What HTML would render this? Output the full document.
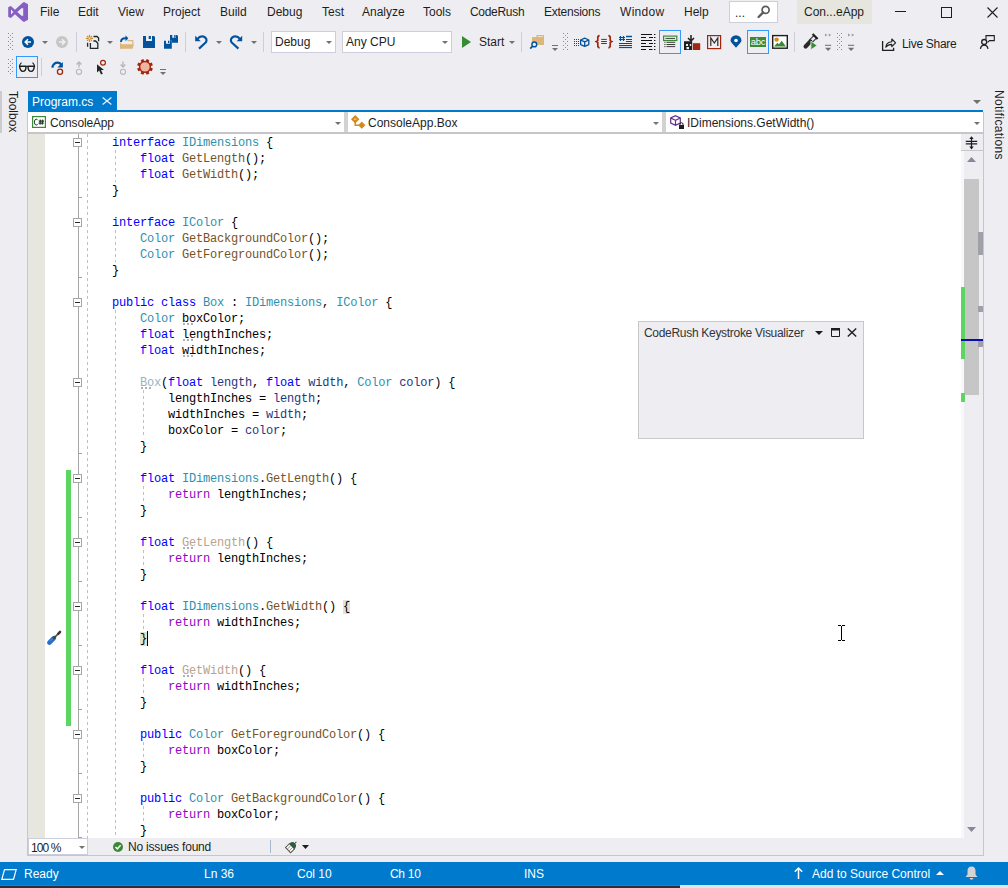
<!DOCTYPE html>
<html><head><meta charset="utf-8">
<style>
*{margin:0;padding:0;box-sizing:border-box}
html,body{width:1008px;height:888px;overflow:hidden;background:#EEEEF2;font-family:"Liberation Sans",sans-serif;font-size:12px;color:#1E1E1E}
.a{position:absolute}
.t{position:absolute;white-space:pre;line-height:14px}
svg{position:absolute;overflow:visible}
.menu span{position:absolute;top:5px;line-height:14px;white-space:pre}
.code{position:absolute;left:28px;top:134px;width:933px;height:704px;background:#fff}
.ln{position:absolute;left:112px;height:16px;line-height:16px;padding-top:1px;font-family:"Liberation Mono",monospace;font-size:12px;letter-spacing:-0.2px;white-space:pre;color:#000}
.k{color:#0000FF}.ty{color:#2B91AF}.m{color:#74531F}.r{color:#8F08C4}.p{color:#1F377F}.ft{color:#94B4C4}.fm{color:#B8A48E}
.hb{background:#DFE3D3}
.sb{position:absolute;left:0;top:862px;width:1008px;height:23px;background:#007ACC;color:#fff}
.sb span{position:absolute;top:5px;line-height:14px;white-space:pre}
.fold{position:absolute;width:9px;height:9px;border:1px solid #A5A5A5;background:#fff}
.fold:after{content:"";position:absolute;left:1px;top:3px;width:5px;height:1px;background:#2A2A2A}
.dash{position:absolute;width:1px;background:repeating-linear-gradient(to bottom,#C0C0C0 0,#C0C0C0 3px,transparent 3px,transparent 6px)}
.sep{position:absolute;width:1px;background:#CCCEDB}
.dd{position:absolute;width:0;height:0;border-left:3px solid transparent;border-right:3px solid transparent;border-top:3px solid #717171}
.grip{position:absolute;width:5px;background-image:radial-gradient(circle,#9A9A9A 0.6px,transparent 0.9px);background-size:4px 4px}

</style></head><body>
<!-- ===== MENU BAR ===== -->
<svg style="left:0;top:0" width="30" height="24" viewBox="0 0 30 24"><g fill="#865FC5"><path d="M22 3.2 L24 2 L28 4.3 V19.7 L24 22 L22 20.8 Z"/><path d="M8.2 7.2 L10 6.2 L11.5 6.6 V17.4 L10 17.8 L8.2 16.8 Z"/></g><path d="M10 7.5 L23.5 19.8 M10 16.5 L23.5 4.2" stroke="#865FC5" stroke-width="3.3" fill="none"/><path d="M17.6 12 L23.2 7.8 V16.2 Z" fill="#EEEEF2"/><path d="M11 9.6 V14.4 L13.4 12 Z" fill="#EEEEF2"/></svg>
<div class="menu">
<span style="left:40px">File</span>
<span style="left:78px">Edit</span>
<span style="left:118px">View</span>
<span style="left:163px">Project</span>
<span style="left:220px">Build</span>
<span style="left:267px">Debug</span>
<span style="left:322px">Test</span>
<span style="left:362px">Analyze</span>
<span style="left:423px">Tools</span>
<span style="left:470px;letter-spacing:-0.3px">CodeRush</span>
<span style="left:544px;letter-spacing:-0.25px">Extensions</span>
<span style="left:620px;letter-spacing:0.3px">Window</span>
<span style="left:684px">Help</span>
</div>
<div class="a" style="left:729px;top:1px;width:49px;height:22px;background:#fff;border:1px solid #CCCEDB"></div>
<span class="t" style="left:735px;top:6px;font-size:12px">...</span>
<svg style="left:757px;top:5px" width="14" height="13" viewBox="0 0 14 13"><circle cx="8.6" cy="4.9" r="3.5" fill="none" stroke="#5A5A5A" stroke-width="1.7"/><path d="M6.2 7.4 L1.6 12" stroke="#5A5A5A" stroke-width="2.3" stroke-linecap="round"/></svg>
<div class="a" style="left:797px;top:0;width:75px;height:24px;background:#E6E6DE"></div>
<span class="t" style="left:804px;top:5px">Con...eApp</span>
<div class="a" style="left:895px;top:11px;width:11px;height:1px;background:#1E1E1E"></div>
<div class="a" style="left:941px;top:7px;width:11px;height:11px;border:1px solid #1E1E1E"></div>
<svg style="left:987px;top:7px" width="11" height="11" viewBox="0 0 11 11"><path d="M0.5 0.5 L10.5 10.5 M10.5 0.5 L0.5 10.5" stroke="#1E1E1E" stroke-width="1.1"/></svg>

<!-- ===== TOOLBAR ROW 1 ===== -->
<svg style="left:8px;top:33px" width="5" height="18" viewBox="0 0 5 18"><g fill="#8C8C8C"><rect x="0" y="0" width="1" height="1"/><rect x="4" y="0" width="1" height="1"/><rect x="2" y="2" width="1" height="1"/><rect x="0" y="4" width="1" height="1"/><rect x="4" y="4" width="1" height="1"/><rect x="2" y="6" width="1" height="1"/><rect x="0" y="8" width="1" height="1"/><rect x="4" y="8" width="1" height="1"/><rect x="2" y="10" width="1" height="1"/><rect x="0" y="12" width="1" height="1"/><rect x="4" y="12" width="1" height="1"/><rect x="2" y="14" width="1" height="1"/><rect x="0" y="16" width="1" height="1"/><rect x="4" y="16" width="1" height="1"/></g></svg>
<svg style="left:22px;top:36px" width="12" height="12" viewBox="0 0 12 12"><circle cx="6" cy="6" r="6" fill="#00539C"/><path d="M9 6 H3.5 M6 3.2 L3.2 6 L6 8.8" stroke="#fff" stroke-width="1.6" fill="none"/></svg>
<div class="dd" style="left:42px;top:41px"></div>
<svg style="left:56px;top:36px" width="12" height="12" viewBox="0 0 12 12"><circle cx="6" cy="6" r="6" fill="#C6C6C6"/><path d="M3 6 H8.5 M6 3.2 L8.8 6 L6 8.8" stroke="#F0F0F0" stroke-width="1.6" fill="none"/></svg>
<div class="sep" style="left:76px;top:32px;height:20px"></div>
<svg style="left:0;top:0" width="140" height="60" viewBox="0 0 140 60"><g stroke="#D68A1C" stroke-width="1.1"><path d="M89.5 34.8 V37 M89.5 39.8 V42 M85.9 38.4 H88.1 M90.9 38.4 H93.1 M87 35.9 L88.3 37.2 M90.7 39.6 L92 40.9 M92 35.9 L90.7 37.2 M88.3 39.6 L87 40.9"/></g><circle cx="89.5" cy="38.4" r="1.2" fill="none" stroke="#D68A1C" stroke-width="0.9"/><path d="M93.5 36.5 H97 L98.6 38.1 V41.2 M87.6 42.8 V46.8" fill="none" stroke="#1F2A24" stroke-width="1.3"/><path d="M93.4 41 H95.6 L97.8 43.2 V48.4 H90.4 V43" fill="none" stroke="#1F2A24" stroke-width="1.3"/><path d="M121 42 Q121.2 38.3 125 38.3 H126.5" fill="none" stroke="#00539C" stroke-width="2"/><path d="M125.5 35.3 L128.3 38.3 L125.5 41.3 Z" fill="#00539C"/><path d="M127.5 40.6 H132.8 V44.3" fill="none" stroke="#DCB67A" stroke-width="1.2"/><path d="M120.6 42.8 V48.8" stroke="#DCB67A" stroke-width="1.2"/><path d="M120.3 44.3 H134 L132.6 48.8 H120.3 Z" fill="#DCB67A"/></svg>
<div class="dd" style="left:107px;top:41px"></div>
<svg style="left:0;top:0" width="190" height="60" viewBox="0 0 190 60"><g fill="#00539C"><path d="M143 36 H146 V41 H152 V36 H154 L155 37 V48 H143 Z"/><rect x="148.7" y="36" width="2.2" height="3"/><path d="M170 35 H172.3 V37.8 H176 V35 H177 L178 36 V42.7 H171.8 V40.7 H170 Z"/><rect x="174.2" y="35" width="1.4" height="2.7"/><path d="M164 40.7 H166 V43.8 H170 V40.7 H171 L171.8 41.5 V48.8 H164 Z"/><rect x="168" y="40.7" width="1.4" height="2.4"/></g></svg>
<div class="sep" style="left:185px;top:32px;height:20px"></div>
<svg style="left:0;top:0" width="260" height="60" viewBox="0 0 260 60"><path d="M195.2 35.8 V41.2 H200.8 Z" fill="#00539C"/><path d="M197.3 39.2 Q200 35.5 203.5 36.5 Q207.8 38.5 206 42.2 L199 48.6" fill="none" stroke="#00539C" stroke-width="2.2"/><path d="M242.2 35.8 V41.2 H236.6 Z" fill="#00539C"/><path d="M240.1 39.2 Q237.4 35.5 233.9 36.5 Q229.6 38.5 231.4 42.2 L238.4 48.6" fill="none" stroke="#00539C" stroke-width="2.2"/></svg>
<div class="dd" style="left:216px;top:41px"></div>
<div class="dd" style="left:251px;top:41px"></div>
<div class="sep" style="left:263px;top:32px;height:20px"></div>
<div class="a" style="left:271px;top:31px;width:65px;height:22px;background:#fff;border:1px solid #CCCEDB"></div>
<span class="t" style="left:275px;top:35px">Debug</span>
<div class="dd" style="left:326px;top:41px"></div>
<div class="a" style="left:342px;top:31px;width:110px;height:22px;background:#fff;border:1px solid #CCCEDB"></div>
<span class="t" style="left:346px;top:35px">Any CPU</span>
<div class="dd" style="left:442px;top:41px"></div>
<svg style="left:462px;top:36px" width="9" height="12" viewBox="0 0 9 12"><path d="M0 0 L9 6 L0 12 Z" fill="#388A34"/></svg>
<span class="t" style="left:479px;top:35px">Start</span>
<div class="dd" style="left:509px;top:41px"></div>
<div class="sep" style="left:521px;top:32px;height:20px"></div>
<svg style="left:0;top:0" width="600" height="60" viewBox="0 0 600 60"><path d="M536.4 35 H544 V45 H532 V37 H536.4 Z" fill="#DCB67A"/><path d="M537.5 36.6 H543" stroke="#F6E6C6" stroke-width="0.9"/><circle cx="534.3" cy="44.4" r="2.4" fill="#EEEEF2" stroke="#00539C" stroke-width="1.4"/><path d="M532.6 46.2 L530.2 48.6" stroke="#00539C" stroke-width="1.7"/><g fill="#3C3C3C"><rect x="574" y="39" width="1" height="1"/><rect x="576" y="39" width="1" height="1"/><rect x="578" y="39" width="1" height="1"/><rect x="574" y="41" width="1" height="1"/><rect x="576" y="41" width="1" height="1"/><rect x="578" y="41" width="1" height="1"/><rect x="574" y="43" width="1" height="1"/><rect x="576" y="43" width="1" height="1"/><rect x="578" y="43" width="1" height="1"/><rect x="574" y="45" width="1" height="1"/><rect x="576" y="45" width="1" height="1"/><rect x="578" y="45" width="1" height="1"/></g><path d="M584.7 38.2 L588.8 40 V44.6 L584.7 46.4 L580.6 44.6 V40 Z M580.6 40 L584.7 41.8 L588.8 40 M584.7 41.8 V46.4" fill="none" stroke="#00539C" stroke-width="1.3" stroke-linejoin="round"/></svg>
<div class="a" style="left:552px;top:45px;width:6px;height:1px;background:#717171"></div>
<div class="dd" style="left:552px;top:48px"></div>
<svg style="left:563px;top:33px" width="5" height="18" viewBox="0 0 5 18"><g fill="#8C8C8C"><rect x="0" y="0" width="1" height="1"/><rect x="4" y="0" width="1" height="1"/><rect x="2" y="2" width="1" height="1"/><rect x="0" y="4" width="1" height="1"/><rect x="4" y="4" width="1" height="1"/><rect x="2" y="6" width="1" height="1"/><rect x="0" y="8" width="1" height="1"/><rect x="4" y="8" width="1" height="1"/><rect x="2" y="10" width="1" height="1"/><rect x="0" y="12" width="1" height="1"/><rect x="4" y="12" width="1" height="1"/><rect x="2" y="14" width="1" height="1"/><rect x="0" y="16" width="1" height="1"/><rect x="4" y="16" width="1" height="1"/></g></svg>
<svg style="left:0;top:0" width="760" height="60" viewBox="0 0 760 60"><path d="M599.6 35.6 Q597.6 35.8 597.8 38 V40.6 L596.2 41.6 L597.8 42.6 V45.4 Q597.6 47.6 599.6 47.8 M608.4 35.6 Q610.4 35.8 610.2 38 V40.6 L611.8 41.6 L610.2 42.6 V45.4 Q610.4 47.6 608.4 47.8" fill="none" stroke="#A1260D" stroke-width="1.7"/><path d="M601.2 39.4 H606.8 M601.2 41.5 H606.8 M601.2 43.5 H606.8" stroke="#3C3C3C" stroke-width="1"/><path d="M620.5 36 V41 M623.5 36 V41 M619 37.5 H625 M619 39.5 H625" stroke="#00539C" stroke-width="1.2" fill="none"/><path d="M626 36.5 H632" stroke="#00539C" stroke-width="1.5"/><path d="M626 39.5 H632 M626 41.5 H632 M619 43.5 H632 M619 45.5 H632" stroke="#3C3C3C" stroke-width="1"/><path d="M619 47.5 H632" stroke="#00539C" stroke-width="1.2"/><g stroke="#111" stroke-width="1.2"><path d="M641 34.5 H652 M641 37.5 H646 M649 37.5 H653 M641 40.5 H652 M641 43.5 H646 M649 43.5 H653 M641 46.5 H652 M641 49.5 H646 M649 49.5 H652.5"/><path d="M654 34.5 H655.4 M654 37.5 H655.4 M654 40.5 H655.4 M654 43.5 H655.4 M654 46.5 H655.4 M654 49.5 H655.4"/></g></svg>
<div class="a" style="left:659px;top:30px;width:22px;height:24px;border:1px solid #3399FF;background:#EEEEF2"></div>
<svg style="left:0;top:0" width="760" height="60" viewBox="0 0 760 60"><rect x="663.6" y="36.1" width="13.2" height="4.4" fill="none" stroke="#388A34" stroke-width="1.2"/><path d="M665.5 38.4 H675" stroke="#3C3C3C" stroke-width="1"/><path d="M664.3 42.3 H665.5 M666.5 42.3 H675.2 M664.3 44.5 H665.5 M666.5 44.5 H675.2 M664.3 46.6 H665.5 M666.5 46.6 H675.2" stroke="#3C3C3C" stroke-width="1"/><path d="M691 35 V40.5 M688 38 L691 41 L694 38" fill="none" stroke="#1E1E1E" stroke-width="1.5"/><path d="M684 41.2 H692.2 V50 H684 Z M686 44 H688 V46 H686 Z M689.8 44 H691.2 V46 H689.8 Z" fill="#1E1E1E" fill-rule="evenodd"/><rect x="686.5" y="47" width="2.5" height="2.2" fill="#EEEEF2"/><rect x="693" y="43.2" width="7.2" height="6.8" fill="#A1260D"/><rect x="707.6" y="35.6" width="13" height="13" fill="none" stroke="#A1260D" stroke-width="1.2"/><path d="M710.8 46 V38 L714.3 43 L717.8 38 V46" fill="none" stroke="#2A2A2A" stroke-width="1.2"/><path d="M736 47.8 L732 43.3 Q730.5 41.6 730.5 40.5 A5.5 5.2 0 0 1 741.5 40.5 Q741.5 41.6 740 43.3 Z" fill="#00539C"/><circle cx="736" cy="40.5" r="1.8" fill="#fff"/></svg>
<div class="a" style="left:747px;top:30px;width:22px;height:24px;border:1px solid #3399FF;background:#EEEEF2"></div>
<svg style="left:750px;top:37px" width="16" height="10" viewBox="0 0 16 10"><rect width="16" height="10" fill="#388A34"/><text x="8" y="8.2" text-anchor="middle" font-family="Liberation Sans" font-size="9.5" letter-spacing="-0.3" fill="#fff">abc</text></svg>
<svg style="left:0;top:0" width="900" height="60" viewBox="0 0 900 60"><rect x="772.7" y="35.6" width="14.6" height="12.6" fill="#fff" stroke="#1E1E1E" stroke-width="1.4"/><circle cx="776.6" cy="39.6" r="2.2" fill="#D68A1C"/><path d="M774 46.6 L777.4 42.8 L779 44.3 L781.6 40.8 L786 46.6 Z" fill="#388A34"/><path d="M810.4 41.6 L805.6 46.4" stroke="#2A2A24" stroke-width="4.2" stroke-linecap="round"/><path d="M814.1 35.3 L809.2 40.2 M816.7 37.9 L811.8 42.8" stroke="#2D3F36" stroke-width="1.2"/><path d="M812.6 34 L817.6 39" stroke="#1E1E1E" stroke-width="2.2"/><path d="M810.9 41.1 L817.1 45.5 L810.9 49.8 Z" fill="#388A34" stroke="#EEEEF2" stroke-width="0.8"/><path d="M825 33.5 L827.3 35 L825 36.6 Z M828.8 33.5 L831.1 35 L828.8 36.6 Z M848 33.5 L850.3 35 L848 36.6 Z M851.8 33.5 L854.1 35 L851.8 36.6 Z" fill="#9A9A9A"/><path d="M825 45.3 H831.2 M848 45.3 H854.2" stroke="#6E6A78" stroke-width="1"/><path d="M825 47.8 H831.2 L828.1 51 Z M848 47.8 H854.2 L851.1 51 Z" fill="#717171"/><path d="M882.6 41 V50.3 H893.6 V47.8" fill="none" stroke="#1E1E1E" stroke-width="1.3"/><path d="M885.8 47.2 Q886.2 42.2 891.8 41.8 V39 L895.6 42.8 L891.8 46.6 V44.4 Q888 44.4 885.8 47.2 Z" fill="none" stroke="#1E1E1E" stroke-width="1.1" stroke-linejoin="round"/></svg>
<div class="sep" style="left:794px;top:32px;height:20px"></div>
<svg style="left:837px;top:33px" width="5" height="18" viewBox="0 0 5 18"><g fill="#8C8C8C"><rect x="0" y="0" width="1" height="1"/><rect x="4" y="0" width="1" height="1"/><rect x="2" y="2" width="1" height="1"/><rect x="0" y="4" width="1" height="1"/><rect x="4" y="4" width="1" height="1"/><rect x="2" y="6" width="1" height="1"/><rect x="0" y="8" width="1" height="1"/><rect x="4" y="8" width="1" height="1"/><rect x="2" y="10" width="1" height="1"/><rect x="0" y="12" width="1" height="1"/><rect x="4" y="12" width="1" height="1"/><rect x="2" y="14" width="1" height="1"/><rect x="0" y="16" width="1" height="1"/><rect x="4" y="16" width="1" height="1"/></g></svg>
<span class="t" style="left:902px;top:37px;letter-spacing:-0.3px">Live Share</span>
<svg style="left:0;top:0" width="1000" height="60" viewBox="0 0 1000 60"><path d="M986 39.6 V35.6 H994.3 V40.6 H989.5 L987.6 42.4" fill="none" stroke="#1E1E1E" stroke-width="1.1"/><circle cx="984.2" cy="42" r="2.5" fill="none" stroke="#1E1E1E" stroke-width="1.3"/><path d="M980.4 48.8 Q981.2 45.2 984.2 45.2 Q987.2 45.2 988 48.8" fill="none" stroke="#1E1E1E" stroke-width="1.3"/></svg>

<!-- ===== TOOLBAR ROW 2 ===== -->
<svg style="left:8px;top:59px" width="5" height="16" viewBox="0 0 5 16"><g fill="#8C8C8C"><rect x="0" y="0" width="1" height="1"/><rect x="4" y="0" width="1" height="1"/><rect x="2" y="2" width="1" height="1"/><rect x="0" y="4" width="1" height="1"/><rect x="4" y="4" width="1" height="1"/><rect x="2" y="6" width="1" height="1"/><rect x="0" y="8" width="1" height="1"/><rect x="4" y="8" width="1" height="1"/><rect x="2" y="10" width="1" height="1"/><rect x="0" y="12" width="1" height="1"/><rect x="4" y="12" width="1" height="1"/><rect x="2" y="14" width="1" height="1"/></g></svg>
<div class="a" style="left:16px;top:56px;width:22px;height:22px;border:1px solid #3399FF;background:#EEEEF2"></div>
<svg style="left:0;top:0" width="170" height="80" viewBox="0 0 170 80"><path d="M21.5 62.6 Q19.6 64.2 19.4 66.6 M32.5 62.6 Q34.4 64.2 34.6 66.6" fill="none" stroke="#1E1E1E" stroke-width="1.2"/><path d="M19.6 66.2 H26 Q26 71.4 22.8 71.4 Q20.2 71.4 19.6 66.2 Z M28 66.2 H34.4 Q33.8 71.4 31.2 71.4 Q28 71.4 28 66.2 Z M26 66.8 Q27 66 28 66.8" fill="none" stroke="#1E1E1E" stroke-width="1.4" stroke-linejoin="round"/><path d="M52.2 67.6 Q53.6 62.4 58 62.6 Q60.2 62.8 61.2 64.6" fill="none" stroke="#00539C" stroke-width="2.2"/><path d="M57.4 67.4 H62.9 V62 Z" fill="#00539C"/><circle cx="60" cy="71.8" r="2.6" fill="#EEEEF2" stroke="#A1260D" stroke-width="1.3"/><path d="M79 62 V67.5 M76.6 64.4 L79 62 L81.4 64.4" fill="none" stroke="#B8B8B8" stroke-width="1.4"/><circle cx="79" cy="71.8" r="2.6" fill="none" stroke="#B8B8B8" stroke-width="1.1"/><path d="M97 64.2 V72.6 L99.2 70.6 L101 74.6 L102.8 73.8 L101 70 L104 70 Z" fill="#1E2A24"/><circle cx="103" cy="62.8" r="2.4" fill="#EEEEF2" stroke="#A1260D" stroke-width="1.2"/><path d="M123 61.5 V67 M120.6 64.6 L123 67 L125.4 64.6" fill="none" stroke="#B8B8B8" stroke-width="1.4"/><circle cx="123" cy="71.8" r="2.6" fill="none" stroke="#B8B8B8" stroke-width="1.1"/><g transform="translate(145,66.9)"><g stroke="#A1260D" stroke-width="3"><path d="M4.16 1.72 L7.30 3.02"/><path d="M1.72 4.16 L3.02 7.30"/><path d="M-1.72 4.16 L-3.02 7.30"/><path d="M-4.16 1.72 L-7.30 3.02"/><path d="M-4.16 -1.72 L-7.30 -3.02"/><path d="M-1.72 -4.16 L-3.02 -7.30"/><path d="M1.72 -4.16 L3.02 -7.30"/><path d="M4.16 -1.72 L7.30 -3.02"/></g><circle r="6.1" fill="#A1260D"/><circle r="4.7" fill="#F0B3A1"/></g></svg>
<div class="sep" style="left:41px;top:58px;height:18px"></div>
<div class="a" style="left:160px;top:69px;width:6px;height:1px;background:#717171"></div>
<div class="dd" style="left:160px;top:72px"></div>

<!-- ===== SIDE LABELS ===== -->
<div class="a" style="left:0;top:91px;width:2px;height:42px;background:#CCCCCC"></div>
<div class="a" style="left:-8px;top:105px;width:42px;height:14px;transform:rotate(90deg);"><span class="t" style="left:0;top:0">Toolbox</span></div>
<div class="a" style="left:964px;top:118px;width:70px;height:14px;transform:rotate(90deg);"><span class="t" style="left:0;top:0;letter-spacing:0.35px">Notifications</span></div>

<!-- ===== TAB ROW ===== -->
<div class="a" style="left:28px;top:91px;width:89px;height:19px;background:#007ACC"></div>
<span class="t" style="left:32px;top:95px;color:#fff">Program.cs</span>
<svg style="left:102px;top:97px" width="10" height="8" viewBox="0 0 10 8"><path d="M0.6 0.4 L9.4 7.6 M9.4 0.4 L0.6 7.6" stroke="#E4ECF6" stroke-width="1.3"/></svg>
<svg style="left:973px;top:100px" width="8" height="4" viewBox="0 0 8 4"><path d="M0 0 H8 L4 4 Z" fill="#717171"/></svg>
<div class="a" style="left:28px;top:110px;width:955px;height:2px;background:#007ACC"></div>

<!-- ===== NAV BAR ===== -->
<div class="a" style="left:27px;top:112px;width:957px;height:22px;background:#fff;border:1px solid #C6C6CA;border-top:0;border-bottom-width:2px"></div>
<div class="a" style="left:344px;top:112px;width:4px;height:20px;background:#D2D2D2"></div>
<div class="a" style="left:662px;top:112px;width:4px;height:20px;background:#D2D2D2"></div>
<svg style="left:32px;top:116px" width="14" height="12" viewBox="0 0 14 12"><rect x="0.6" y="0.6" width="12.8" height="10.8" fill="#fff" stroke="#388A34" stroke-width="1.2"/><path d="M5.8 4.2 Q5.2 3.2 4.2 3.2 Q2.4 3.2 2.4 6.1 Q2.4 9 4.2 9 Q5.2 9 5.8 8.2" fill="none" stroke="#2A3A30" stroke-width="1"/><path d="M8.4 3.6 L8 8.6 M10.6 3.6 L10.2 8.6 M6.8 5.1 H12 M6.6 7.2 H11.8" stroke="#2A3A30" stroke-width="1.25"/></svg>
<span class="t" style="left:50px;top:116px;letter-spacing:-0.15px">ConsoleApp</span>
<div class="dd" style="left:335px;top:122px"></div>
<svg style="left:351px;top:115px" width="15" height="15" viewBox="0 0 15 15"><path d="M4.2 0 L8.4 4.2 L4.2 8.4 L0 4.2 Z M10.8 6.6 L14.4 10.2 L10.8 13.8 L7.2 10.2 Z" fill="#D68A1C"/><path d="M4.2 7 V10.2 H8" fill="none" stroke="#D68A1C" stroke-width="1.4"/><path d="M3 4.2 H5.4" stroke="#F6D9A8" stroke-width="1"/></svg>
<span class="t" style="left:368px;top:116px">ConsoleApp.Box</span>
<div class="dd" style="left:653px;top:122px"></div>
<svg style="left:670px;top:115px" width="15" height="14" viewBox="0 0 15 14"><path d="M5.5 0.7 L10.3 3 V8 L5.5 10.3 L0.7 8 V3 Z M0.7 3 L5.5 5.3 L10.3 3 M5.5 5.3 V10.3" fill="none" stroke="#652D90" stroke-width="1.2"/><path d="M9 10 H14 V14 H9 Z" fill="#1E1E1E"/><path d="M10 10 V8.5 Q11.5 7 13 8.5 V10" fill="none" stroke="#1E1E1E" stroke-width="1"/></svg>
<span class="t" style="left:687px;top:116px">IDimensions.GetWidth()</span>
<div class="dd" style="left:974px;top:122px"></div>

<!-- ===== SCROLLBAR ===== -->
<div class="a" style="left:961px;top:134px;width:22px;height:721px;background:#EEEEF2"></div>
<div class="a" style="left:960px;top:134px;width:23px;height:17px;background:#EEEEF2;border:1px solid #C6C6CA;border-right:0;border-top:0"></div>
<svg style="left:0;top:0" width="990" height="160" viewBox="0 0 990 160"><path d="M971.5 137.5 V148" stroke="#1E1E1E" stroke-width="1.2"/><path d="M969.3 139 L971.5 136.2 L973.7 139 Z M969.3 146.6 L971.5 149.4 L973.7 146.6 Z" fill="#1E1E1E"/><path d="M965.8 141.4 H977.2 M965.8 143.8 H977.2" stroke="#1E1E1E" stroke-width="1.2"/></svg>
<div class="a" style="left:961px;top:151px;width:3px;height:687px;background:#F8F8FA"></div>
<svg style="left:967px;top:157px" width="9" height="5" viewBox="0 0 9 5"><path d="M0 5 H9 L4.5 0 Z" fill="#868999"/></svg>
<div class="a" style="left:964px;top:179px;width:15px;height:216px;background:#C6C6C6"></div>
<div class="a" style="left:978px;top:232px;width:5px;height:23px;background:#A0A0A8"></div>
<div class="a" style="left:978px;top:306px;width:5px;height:6px;background:#A0A0A8"></div>
<div class="a" style="left:978px;top:341px;width:5px;height:6px;background:#A0A0A8"></div>
<div class="a" style="left:961px;top:287px;width:4px;height:72px;background:#5DD561"></div>
<div class="a" style="left:961px;top:393px;width:4px;height:9px;background:#5DD561"></div>
<div class="a" style="left:960px;top:339px;width:23px;height:2px;background:#0A0AB4"></div>
<svg style="left:967px;top:827px" width="9" height="5" viewBox="0 0 9 5"><path d="M0 0 H9 L4.5 5 Z" fill="#868999"/></svg>
<div class="a" style="left:983px;top:112px;width:1px;height:744px;background:#C6C6CA"></div>
<div class="a" style="left:27px;top:112px;width:1px;height:744px;background:#C6C6CA"></div>

<div class="code"></div>
<div class="a" style="left:28px;top:134px;width:17px;height:704px;background:#E7E7E0"></div>
<div class="a" style="left:78px;top:134px;width:1px;height:704px;background:#A5A5A5"></div>
<div class="fold" style="left:73px;top:138px"></div>
<div class="fold" style="left:73px;top:218px"></div>
<div class="fold" style="left:73px;top:298px"></div>
<div class="fold" style="left:73px;top:378px"></div>
<div class="fold" style="left:73px;top:474px"></div>
<div class="fold" style="left:73px;top:538px"></div>
<div class="fold" style="left:73px;top:602px"></div>
<div class="fold" style="left:73px;top:666px"></div>
<div class="fold" style="left:73px;top:730px"></div>
<div class="fold" style="left:73px;top:794px"></div>
<div class="a" style="left:78px;top:197px;width:4px;height:1px;background:#A5A5A5"></div>
<div class="a" style="left:78px;top:277px;width:4px;height:1px;background:#A5A5A5"></div>
<div class="a" style="left:78px;top:453px;width:4px;height:1px;background:#A5A5A5"></div>
<div class="a" style="left:78px;top:517px;width:4px;height:1px;background:#A5A5A5"></div>
<div class="a" style="left:78px;top:581px;width:4px;height:1px;background:#A5A5A5"></div>
<div class="a" style="left:78px;top:645px;width:4px;height:1px;background:#A5A5A5"></div>
<div class="a" style="left:78px;top:709px;width:4px;height:1px;background:#A5A5A5"></div>
<div class="a" style="left:78px;top:773px;width:4px;height:1px;background:#A5A5A5"></div>
<div class="a" style="left:78px;top:837px;width:4px;height:1px;background:#A5A5A5"></div>
<div class="dash" style="left:87px;top:134px;height:704px"></div>
<div class="dash" style="left:115px;top:150px;height:32px"></div>
<div class="dash" style="left:115px;top:230px;height:32px"></div>
<div class="dash" style="left:115px;top:310px;height:528px"></div>
<div class="dash" style="left:143px;top:390px;height:48px"></div>
<div class="dash" style="left:143px;top:486px;height:16px"></div>
<div class="dash" style="left:143px;top:550px;height:16px"></div>
<div class="dash" style="left:143px;top:614px;height:16px"></div>
<div class="dash" style="left:143px;top:678px;height:16px"></div>
<div class="dash" style="left:143px;top:742px;height:16px"></div>
<div class="dash" style="left:143px;top:806px;height:16px"></div>
<div class="a" style="left:183px;top:323px;width:2px;height:2px;background:#B0B0B0"></div>
<div class="a" style="left:187px;top:323px;width:2px;height:2px;background:#B0B0B0"></div>
<div class="a" style="left:191px;top:323px;width:2px;height:2px;background:#B0B0B0"></div>
<div class="a" style="left:183px;top:339px;width:2px;height:2px;background:#B0B0B0"></div>
<div class="a" style="left:187px;top:339px;width:2px;height:2px;background:#B0B0B0"></div>
<div class="a" style="left:191px;top:339px;width:2px;height:2px;background:#B0B0B0"></div>
<div class="a" style="left:183px;top:355px;width:2px;height:2px;background:#B0B0B0"></div>
<div class="a" style="left:187px;top:355px;width:2px;height:2px;background:#B0B0B0"></div>
<div class="a" style="left:191px;top:355px;width:2px;height:2px;background:#B0B0B0"></div>
<div class="a" style="left:141px;top:387px;width:2px;height:2px;background:#B0B0B0"></div>
<div class="a" style="left:145px;top:387px;width:2px;height:2px;background:#B0B0B0"></div>
<div class="a" style="left:149px;top:387px;width:2px;height:2px;background:#B0B0B0"></div>
<div class="a" style="left:183px;top:547px;width:2px;height:2px;background:#B0B0B0"></div>
<div class="a" style="left:187px;top:547px;width:2px;height:2px;background:#B0B0B0"></div>
<div class="a" style="left:191px;top:547px;width:2px;height:2px;background:#B0B0B0"></div>
<div class="a" style="left:183px;top:675px;width:2px;height:2px;background:#B0B0B0"></div>
<div class="a" style="left:187px;top:675px;width:2px;height:2px;background:#B0B0B0"></div>
<div class="a" style="left:191px;top:675px;width:2px;height:2px;background:#B0B0B0"></div>
<div class="a" style="left:66px;top:470px;width:5px;height:256px;background:#5DD561"></div>
<div class="ln" style="top:134px"><span class="k">interface</span> <span class="ty">IDimensions</span> {</div>
<div class="ln" style="top:150px">    <span class="k">float</span> <span class="m">GetLength</span>();</div>
<div class="ln" style="top:166px">    <span class="k">float</span> <span class="m">GetWidth</span>();</div>
<div class="ln" style="top:182px">}</div>
<div class="ln" style="top:214px"><span class="k">interface</span> <span class="ty">IColor</span> {</div>
<div class="ln" style="top:230px">    <span class="ty">Color</span> <span class="m">GetBackgroundColor</span>();</div>
<div class="ln" style="top:246px">    <span class="ty">Color</span> <span class="m">GetForegroundColor</span>();</div>
<div class="ln" style="top:262px">}</div>
<div class="ln" style="top:294px"><span class="k">public</span> <span class="k">class</span> <span class="ty">Box</span> : <span class="ty">IDimensions</span>, <span class="ty">IColor</span> {</div>
<div class="ln" style="top:310px">    <span class="ty">Color</span> boxColor;</div>
<div class="ln" style="top:326px">    <span class="k">float</span> lengthInches;</div>
<div class="ln" style="top:342px">    <span class="k">float</span> widthInches;</div>
<div class="ln" style="top:374px">    <span class="ft">Box</span>(<span class="k">float</span> <span class="p">length</span>, <span class="k">float</span> <span class="p">width</span>, <span class="ty">Color</span> <span class="p">color</span>) {</div>
<div class="ln" style="top:390px">        lengthInches = <span class="p">length</span>;</div>
<div class="ln" style="top:406px">        widthInches = <span class="p">width</span>;</div>
<div class="ln" style="top:422px">        boxColor = <span class="p">color</span>;</div>
<div class="ln" style="top:438px">    }</div>
<div class="ln" style="top:470px">    <span class="k">float</span> <span class="ty">IDimensions</span>.<span class="m">GetLength</span>() {</div>
<div class="ln" style="top:486px">        <span class="r">return</span> lengthInches;</div>
<div class="ln" style="top:502px">    }</div>
<div class="ln" style="top:534px">    <span class="k">float</span> <span class="fm">GetLength</span>() {</div>
<div class="ln" style="top:550px">        <span class="r">return</span> lengthInches;</div>
<div class="ln" style="top:566px">    }</div>
<div class="ln" style="top:598px">    <span class="k">float</span> <span class="ty">IDimensions</span>.<span class="m">GetWidth</span>() <span class="hb">{</span></div>
<div class="ln" style="top:614px">        <span class="r">return</span> widthInches;</div>
<div class="ln" style="top:630px">    <span class="hb">}</span></div>
<div class="ln" style="top:662px">    <span class="k">float</span> <span class="fm">GetWidth</span>() {</div>
<div class="ln" style="top:678px">        <span class="r">return</span> widthInches;</div>
<div class="ln" style="top:694px">    }</div>
<div class="ln" style="top:726px">    <span class="k">public</span> <span class="ty">Color</span> <span class="m">GetForegroundColor</span>() {</div>
<div class="ln" style="top:742px">        <span class="r">return</span> boxColor;</div>
<div class="ln" style="top:758px">    }</div>
<div class="ln" style="top:790px">    <span class="k">public</span> <span class="ty">Color</span> <span class="m">GetBackgroundColor</span>() {</div>
<div class="ln" style="top:806px">        <span class="r">return</span> boxColor;</div>
<div class="ln" style="top:822px">    }</div>
<!-- ===== POPUP ===== -->
<div class="a" style="left:638px;top:321px;width:226px;height:118px;background:#EEEEF2;border:1px solid #C8C8CC"></div>
<span class="t" style="left:644px;top:326px;letter-spacing:-0.3px;color:#333337">CodeRush Keystroke Visualizer</span>
<svg style="left:815px;top:331px" width="8" height="4" viewBox="0 0 8 4"><path d="M0 0 H8 L4 4 Z" fill="#1E1E1E"/></svg>
<svg style="left:831px;top:328px" width="9" height="9" viewBox="0 0 9 9"><path d="M0.5 0.5 H8.5 V8.5 H0.5 Z" fill="none" stroke="#1E1E1E" stroke-width="1"/><rect x="0" y="0" width="9" height="2.5" fill="#1E1E1E"/></svg>
<svg style="left:847px;top:328px" width="10" height="9" viewBox="0 0 10 9"><path d="M0.8 0.5 L9.2 8.5 M9.2 0.5 L0.8 8.5" stroke="#1E1E1E" stroke-width="1.4"/></svg>

<!-- screwdriver -->
<svg style="left:44px;top:628px" width="20" height="20" viewBox="0 0 20 20"><path d="M5.4 14.6 L9.6 10.4" stroke="#2F6CCB" stroke-width="4.6" stroke-linecap="round"/><path d="M6.4 12.2 L7.2 13 M8.2 10.8 L9 11.6 M7.4 11.4 L8 12" stroke="#35A6D8" stroke-width="1"/><path d="M9.2 10.8 L11.4 8.6" stroke="#45484A" stroke-width="3"/><path d="M11 9 L14.6 5.4" stroke="#3C4A40" stroke-width="1.5"/><path d="M14.2 5.8 L16 4" stroke="#3E3A44" stroke-width="2.6" stroke-linecap="round"/></svg>
<!-- mouse ibeam -->
<div class="a" style="left:838px;top:625px;width:3px;height:1px;background:#000"></div>
<div class="a" style="left:842px;top:625px;width:3px;height:1px;background:#000"></div>
<div class="a" style="left:841px;top:626px;width:1px;height:14px;background:#000"></div>
<div class="a" style="left:838px;top:640px;width:3px;height:1px;background:#000"></div>
<div class="a" style="left:842px;top:640px;width:3px;height:1px;background:#000"></div>
<!-- cursor & brace -->
<div class="a" style="left:147px;top:631px;width:1px;height:15px;background:#000"></div>

<!-- ===== ZOOM BAR ===== -->
<div class="a" style="left:27px;top:838px;width:957px;height:18px;background:#EEEEF2;border:1px solid #C6C6CA;border-top:0"></div>
<div class="a" style="left:28px;top:838px;width:60px;height:17px;background:#fff;border:1px solid #CCCEDB"></div>
<span class="t" style="left:31px;top:841px;letter-spacing:-0.9px">100 %</span>
<div class="dd" style="left:79px;top:846px"></div>
<svg style="left:113px;top:842px" width="10" height="10" viewBox="0 0 10 10"><circle cx="5" cy="5" r="5" fill="#388A34"/><path d="M2.5 5 L4.3 6.8 L7.6 3.3" fill="none" stroke="#fff" stroke-width="1.5"/></svg>
<span class="t" style="left:128px;top:840px;letter-spacing:-0.2px">No issues found</span>
<div class="a" style="left:270px;top:840px;width:1px;height:13px;background:#A8B8CC"></div>
<svg style="left:0;top:0" width="320" height="860" viewBox="0 0 320 860"><g transform="translate(291.6,846.6) rotate(45)"><rect x="-3.6" y="-0.6" width="7.2" height="5.6" fill="#fff" stroke="#5A5040" stroke-width="1"/><path d="M-1.2 0 V5 M1.2 0 V5" stroke="#6A6050" stroke-width="0.7"/><path d="M-3.8 -0.2 Q-3.8 -4.6 0 -4.6 Q3.8 -4.6 3.8 -0.2 Z" fill="#2E5A40"/><path d="M0 -4.4 V-6.8" stroke="#4A3A50" stroke-width="1"/></g></svg>
<svg style="left:302px;top:845px" width="7" height="4" viewBox="0 0 7 4"><path d="M0 0 H7 L3.5 4 Z" fill="#1E1E1E"/></svg>

<!-- ===== STATUS BAR ===== -->
<div class="sb">
<svg style="left:1px;top:7px" width="16" height="11" viewBox="0 0 16 11"><path d="M3.5 0.6 H15.2 L12.5 10.4 H0.8 Z" fill="none" stroke="#fff" stroke-width="1.2"/></svg>
<span style="left:24px">Ready</span>
<span style="left:204px">Ln 36</span>
<span style="left:297px">Col 10</span>
<span style="left:390px;letter-spacing:-0.3px">Ch 10</span>
<span style="left:524px">INS</span>
<svg style="left:794px;top:5px" width="9" height="12" viewBox="0 0 9 12"><path d="M4.5 1 V12 M0.8 4.7 L4.5 1 L8.2 4.7" fill="none" stroke="#fff" stroke-width="1.5"/></svg>
<span style="left:812px">Add to Source Control</span>
<svg style="left:936px;top:9px" width="8" height="4" viewBox="0 0 8 4"><path d="M0 4 H8 L4 0 Z" fill="#fff"/></svg>
<svg style="left:965px;top:4px" width="13" height="14" viewBox="0 0 13 14"><path d="M6.5 0.5 Q10.5 0.5 10.5 5 V8.5 L12.5 11 H0.5 L2.5 8.5 V5 Q2.5 0.5 6.5 0.5 Z" fill="#D4D4D4"/><path d="M4.5 12 H8.5 Q8 13.8 6.5 13.8 Q5 13.8 4.5 12 Z" fill="#D4D4D4"/></svg>
</div>
<div class="a" style="left:0;top:885px;width:680px;height:1px;background:#6A6A72"></div><div class="a" style="left:0;top:886px;width:680px;height:2px;background:#2E2D3E"></div>
<div class="a" style="left:680px;top:885px;width:328px;height:3px;background:#DDE6EA"></div>

</body></html>
